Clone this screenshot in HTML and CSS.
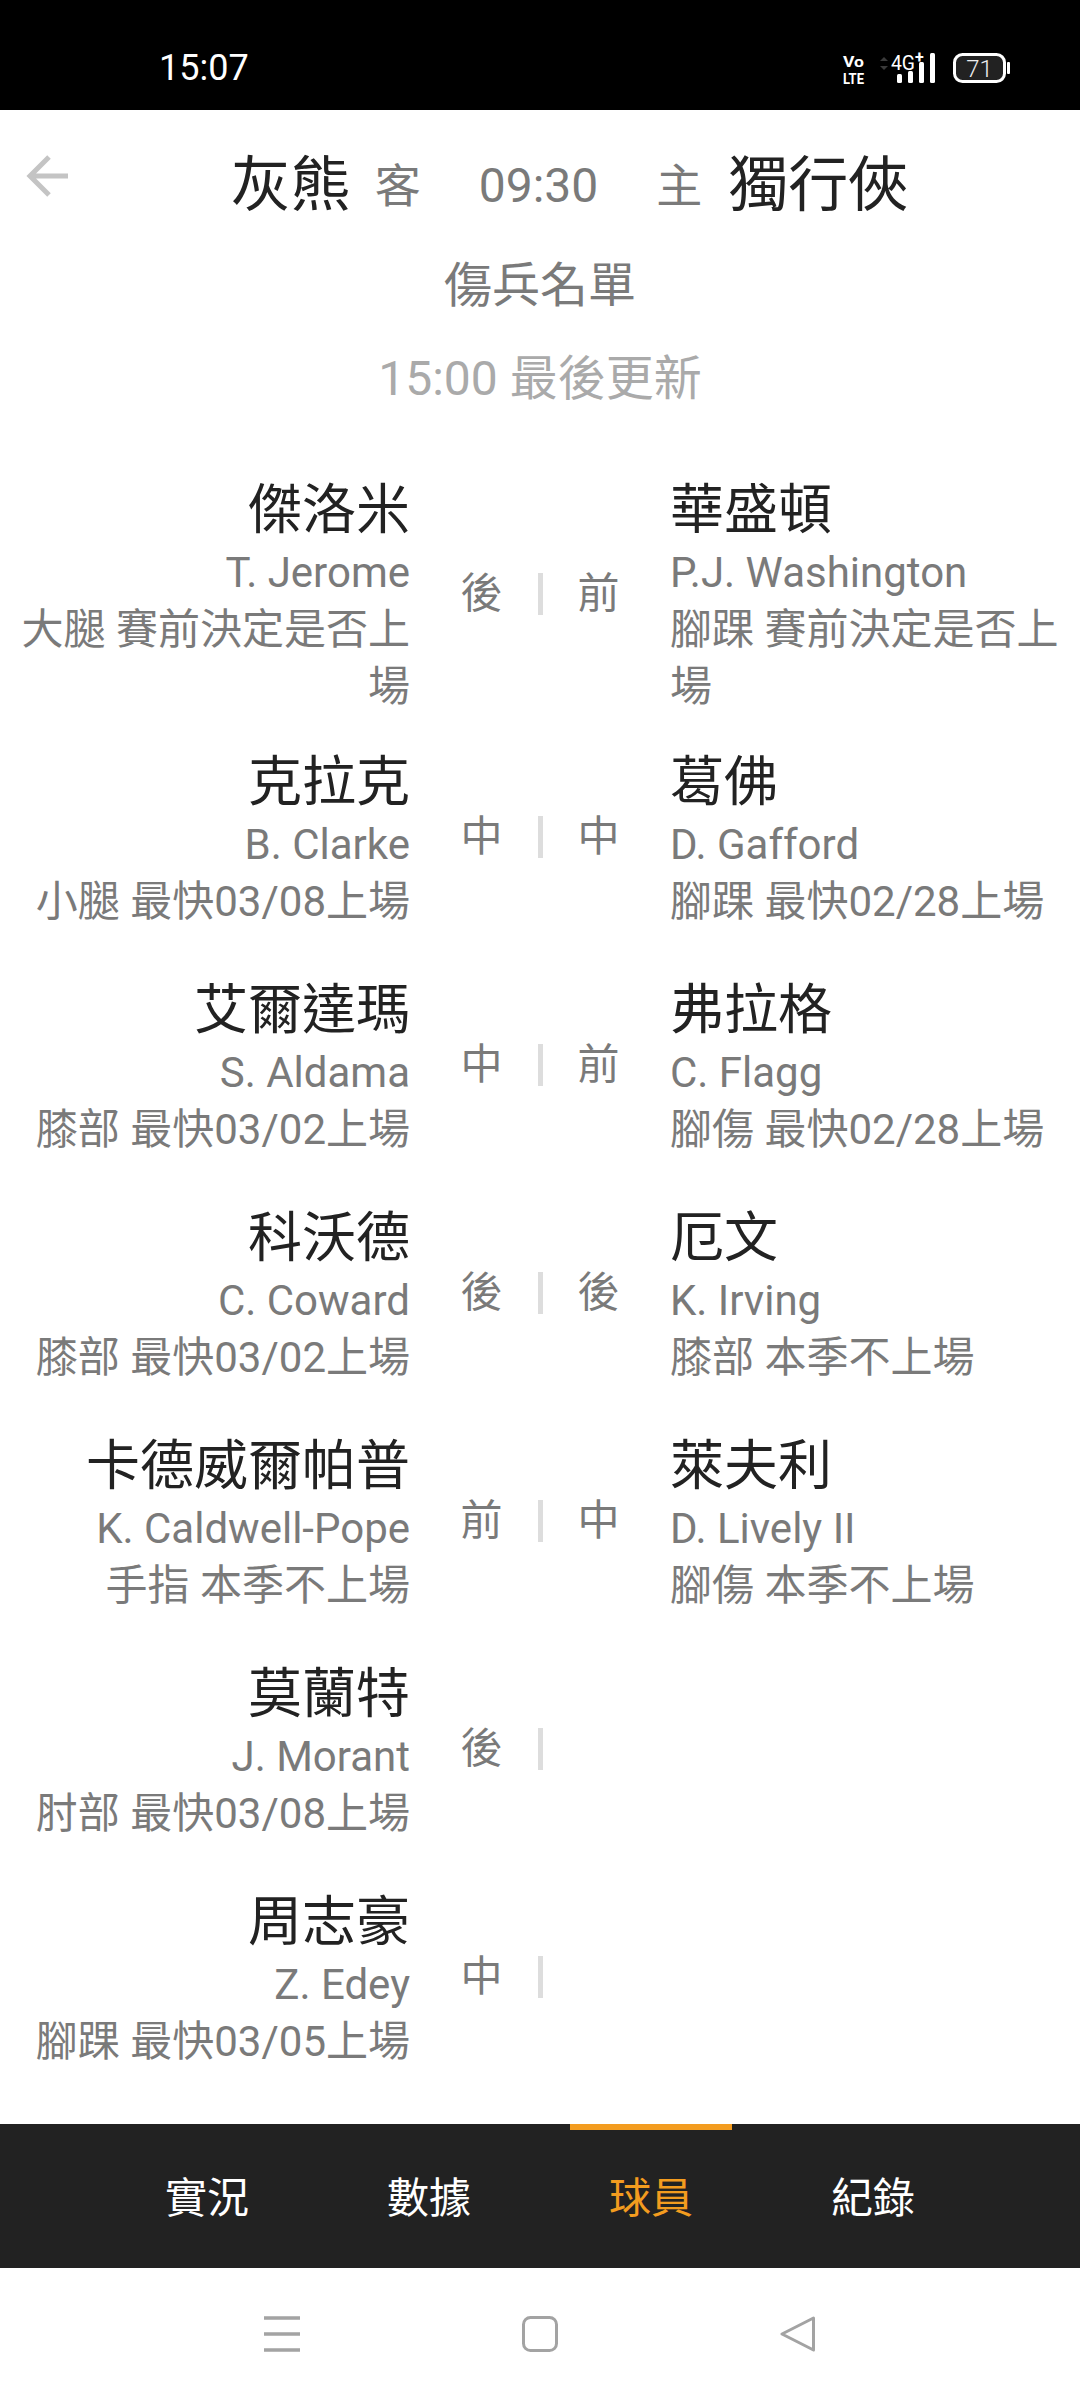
FILE: index.html
```html
<!DOCTYPE html>
<html lang="zh-Hant">
<head>
    <meta charset="UTF-8">
    <meta name="viewport" content="width=device-width, initial-scale=1.0">
    <title>傷兵名單</title>
    <link rel="stylesheet" href="styles.css">
</head>
<body>
    <div class="status-bar">
        <span class="clock">15:07</span>
        <svg class="status-icons" width="180" height="30" viewBox="0 0 180 30">
            <text x="13" y="14" class="volte" textLength="21" lengthAdjust="spacingAndGlyphs">Vo</text>
            <text x="13" y="31" class="volte" textLength="21" lengthAdjust="spacingAndGlyphs">LTE</text>
            <path d="M50 8l4-4 4 4zM50 13l4 4 4-4z" fill="#3a3a3a"/>
            <text x="61" y="17" class="net" textLength="24" lengthAdjust="spacingAndGlyphs">4G</text>
            <text x="85" y="10" class="net-plus">+</text>
            <rect x="67" y="21" width="5" height="9" rx="1.500" fill="#fff"/>
            <rect x="78" y="18" width="5" height="12" rx="1.500" fill="#fff"/>
            <rect x="89" y="9" width="5" height="21" rx="1.500" fill="#fff"/>
            <rect x="100" y="0" width="5" height="30" rx="1.500" fill="#fff"/>
            <rect x="124.500" y="1.500" width="50" height="27" rx="8" fill="#222" stroke="#fff" stroke-width="3"/>
            <rect x="177" y="9" width="3" height="12" rx="1" fill="#fff"/>
            <text x="149.500" y="24" class="battery">71</text>
        </svg>
    </div>

    <div class="content">
        <svg class="back" width="44" height="44" viewBox="0 0 44 44">
            <path d="M23 3L4 22l19 19M4 22h38" fill="none" stroke="#c4c4c4" stroke-width="5"/>
        </svg>

        <div class="match">
            <div class="side side-away">
                <span class="team">灰熊</span>
                <span class="tag">客</span>
            </div>
            <span class="time">09:30</span>
            <div class="side side-home">
                <span class="tag">主</span>
                <span class="team">獨行俠</span>
            </div>
        </div>
        <div class="subtitle">傷兵名單</div>
        <div class="updated">15:00 最後更新</div>

        <div class="list">
            <div class="row row-wrapped">
                <div class="player away">
                    <div class="name">傑洛米</div>
                    <div class="en">T. Jerome</div>
                    <div class="note">大腿 賽前決定是否上場</div>
                </div>
                <div class="mid"><span class="pos">後</span><i class="bar"></i><span class="pos">前</span></div>
                <div class="player">
                    <div class="name">華盛頓</div>
                    <div class="en">P.J. Washington</div>
                    <div class="note">腳踝 賽前決定是否上場</div>
                </div>
            </div>
            <div class="row">
                <div class="player away">
                    <div class="name">克拉克</div>
                    <div class="en">B. Clarke</div>
                    <div class="note">小腿 最快03/08上場</div>
                </div>
                <div class="mid"><span class="pos">中</span><i class="bar"></i><span class="pos">中</span></div>
                <div class="player">
                    <div class="name">葛佛</div>
                    <div class="en">D. Gafford</div>
                    <div class="note">腳踝 最快02/28上場</div>
                </div>
            </div>
            <div class="row">
                <div class="player away">
                    <div class="name">艾爾達瑪</div>
                    <div class="en">S. Aldama</div>
                    <div class="note">膝部 最快03/02上場</div>
                </div>
                <div class="mid"><span class="pos">中</span><i class="bar"></i><span class="pos">前</span></div>
                <div class="player">
                    <div class="name">弗拉格</div>
                    <div class="en">C. Flagg</div>
                    <div class="note">腳傷 最快02/28上場</div>
                </div>
            </div>
            <div class="row">
                <div class="player away">
                    <div class="name">科沃德</div>
                    <div class="en">C. Coward</div>
                    <div class="note">膝部 最快03/02上場</div>
                </div>
                <div class="mid"><span class="pos">後</span><i class="bar"></i><span class="pos">後</span></div>
                <div class="player">
                    <div class="name">厄文</div>
                    <div class="en">K. Irving</div>
                    <div class="note">膝部 本季不上場</div>
                </div>
            </div>
            <div class="row">
                <div class="player away">
                    <div class="name">卡德威爾帕普</div>
                    <div class="en">K. Caldwell-Pope</div>
                    <div class="note">手指 本季不上場</div>
                </div>
                <div class="mid"><span class="pos">前</span><i class="bar"></i><span class="pos">中</span></div>
                <div class="player">
                    <div class="name">萊夫利</div>
                    <div class="en">D. Lively II</div>
                    <div class="note">腳傷 本季不上場</div>
                </div>
            </div>
            <div class="row">
                <div class="player away">
                    <div class="name">莫蘭特</div>
                    <div class="en">J. Morant</div>
                    <div class="note">肘部 最快03/08上場</div>
                </div>
                <div class="mid"><span class="pos">後</span><i class="bar"></i><span class="pos"></span></div>
                <div class="player"></div>
            </div>
            <div class="row">
                <div class="player away">
                    <div class="name">周志豪</div>
                    <div class="en">Z. Edey</div>
                    <div class="note">腳踝 最快03/05上場</div>
                </div>
                <div class="mid"><span class="pos">中</span><i class="bar"></i><span class="pos"></span></div>
                <div class="player"></div>
            </div>
        </div>
    </div>

    <div class="tabs">
        <div class="tab">實況</div>
        <div class="tab">數據</div>
        <div class="tab active">球員</div>
        <div class="tab">紀錄</div>
    </div>

    <div class="nav">
        <svg width="36" height="36" viewBox="0 0 36 36">
            <path d="M0 2h36M0 18h36M0 34h36" stroke="#a3a3a3" stroke-width="3.500"/>
        </svg>
        <svg width="36" height="36" viewBox="0 0 36 36">
            <rect x="1.500" y="1.500" width="33" height="33" rx="7" fill="none" stroke="#a3a3a3" stroke-width="3"/>
        </svg>
        <svg width="36" height="36" viewBox="0 0 36 36">
            <path d="M33.500 2L2 18l31.500 16z" fill="none" stroke="#a3a3a3" stroke-width="3" stroke-linejoin="round"/>
        </svg>
    </div>
</body>
</html>
```

FILE: styles.css
```css
body {
    display: flex;
    flex-direction: column;
    height: 2400px;
    margin: 0;
    font-family: Roboto, "Noto Sans CJK TC", sans-serif;
    background-color: #fff;
    color: #7a7a7a;
}

.status-bar {
    display: flex;
    justify-content: space-between;
    align-items: center;
    height: 110px;
    padding: 26px 70px 0 159px;
    box-sizing: border-box;
    background-color: #000;
}

.clock {
    font-size: 36px;
    color: #fff;
}

.status-icons {
    display: block;
    overflow: visible;
}

.volte {
    font-size: 15px;
    font-weight: 700;
    fill: #fff;
}

.net {
    font-size: 20px;
    fill: #fff;
}

.net-plus {
    font-size: 16px;
    font-weight: 700;
    fill: #fff;
}

.battery {
    font-size: 24px;
    font-weight: 300;
    fill: #eee;
    text-anchor: middle;
}

.content {
    position: relative;
    flex: 1;
}

.back {
    position: absolute;
    left: 26px;
    top: 44px;
}

.match {
    display: grid;
    grid-template-columns: 1fr auto 1fr;
    align-items: center;
    column-gap: 58px;
    height: 66px;
    padding: 43px 3px 0 0;
}

.side {
    display: flex;
    align-items: center;
    gap: 26px;
}

.side-away {
    justify-content: flex-end;
    gap: 24px;
}

.team {
    font-size: 60px;
    line-height: 66px;
    color: #222;
}

.tag {
    font-size: 46px;
    line-height: 66px;
}

.time {
    font-size: 48px;
    line-height: 66px;
}

.subtitle {
    margin-top: 31px;
    font-size: 48px;
    line-height: 72px;
    text-align: center;
}

.updated {
    margin-top: 21px;
    font-size: 48px;
    line-height: 72px;
    text-align: center;
    color: #aaa;
}

.list {
    padding: 57px 20px 0;
}

.row {
    display: grid;
    grid-template-columns: 390px 260px 390px;
    align-items: center;
    padding-bottom: 42px;
}

.row-wrapped {
    padding-bottom: 29px;
}

.away {
    text-align: right;
}

.name {
    margin: 3px 0 -3px;
    font-size: 54px;
    line-height: 72px;
    color: #222;
}

.en,
.note {
    font-size: 42px;
    line-height: 57px;
}

.mid {
    display: flex;
    justify-content: center;
    align-items: center;
    gap: 35px;
}

.pos {
    width: 42px;
    font-size: 42px;
    line-height: 56px;
    text-align: center;
}

.bar {
    width: 5px;
    height: 42px;
    background-color: #ddd;
}

.tabs {
    display: flex;
    align-items: center;
    height: 144px;
    padding: 0 96px;
    background-color: #222;
}

.tab {
    position: relative;
    flex: 1;
    height: 100%;
    font-size: 42px;
    line-height: 150px;
    text-align: center;
    color: #fff;
}

.active {
    color: #f39c1f;
}

/* orange strip on top of the selected tab */
.active::before {
    content: "";
    position: absolute;
    top: 0;
    left: 30px;
    right: 30px;
    height: 6px;
    background-color: #f39c1f;
}

.nav {
    display: flex;
    justify-content: center;
    align-items: center;
    gap: 222px;
    height: 132px;
}
```
